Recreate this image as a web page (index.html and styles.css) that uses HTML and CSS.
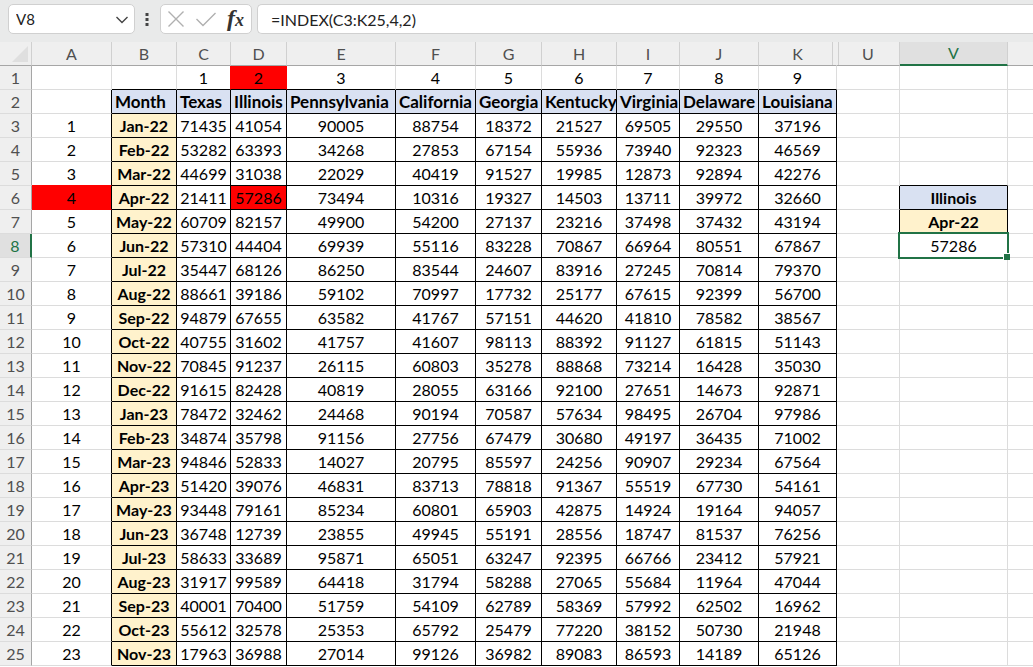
FILE: index.html
```html
<!DOCTYPE html>
<html lang="en">
<head>
  <meta charset="UTF-8" />
  <meta name="viewport" content="width=device-width, initial-scale=1.0" />
  <title>INDEX example</title>
  <link rel="stylesheet" href="styles.css">
</head>

<body>
  <header class="formula-bar">
    <div class="box name-box">
      <input class="name-input" type="text" value="V8" aria-label="Name box">
      <button class="icon-button" type="button" aria-label="Show names">
        <svg width="14" height="12" viewBox="0 0 14 12"><path d="M1.5 4 L7 9.5 L12.5 4" stroke="#444" stroke-width="1.4" /></svg>
      </button>
    </div>
    <svg class="grip" width="4" height="14" viewBox="0 0 4 14"><path d="M0.5 1h3v3h-3z M0.5 6h3v3h-3z M0.5 11h3v3h-3z" fill="#444" /></svg>
    <div class="box tools">
      <button class="icon-button" type="button" aria-label="Cancel">
        <svg width="18" height="18" viewBox="0 0 18 18"><path d="M1.5 1.5 L16.5 16.5 M16.5 1.5 L1.5 16.5" stroke="#b0b0b0" stroke-width="1.4" /></svg>
      </button>
      <button class="icon-button" type="button" aria-label="Enter">
        <svg width="22" height="18" viewBox="0 0 22 18"><path d="M1.5 9 L8 15.5 L20.5 3" stroke="#b0b0b0" stroke-width="1.4" /></svg>
      </button>
      <button class="icon-button fx" type="button" aria-label="Insert function"><i>f</i><i class="fx-x">x</i></button>
    </div>
    <input class="box formula-input" type="text" value="=INDEX(C3:K25,4,2)" aria-label="Formula">
  </header>

  <main>
    <table class="sheet">
      <colgroup>
        <col class="w-head"><col class="w-a"><col class="w-b"><col class="w-c"><col class="w-d"><col class="w-e"><col class="w-f"><col class="w-g"><col class="w-h"><col class="w-i"><col class="w-j"><col class="w-k"><col class="w-u"><col class="w-v"><col>
      </colgroup>
      <thead>
        <tr><th class="corner"><svg width="16" height="16" viewBox="0 0 16 16"><path d="M16 0v16H0z" fill="#dfdfdf" /></svg></th><th>A</th><th>B</th><th>C</th><th>D</th><th>E</th><th>F</th><th>G</th><th>H</th><th>I</th><th>J</th><th class="gap">K</th><th>U</th><th class="current">V</th><th></th></tr>
      </thead>
      <tbody>
        <tr class="index"><th>1</th><td></td><td></td><td class="before-hit">1</td><td class="hit">2</td><td>3</td><td>4</td><td>5</td><td>6</td><td>7</td><td>8</td><td>9</td><td></td><td></td><td></td></tr>
        <tr class="titles"><th>2</th><td></td><td>Month</td><td>Texas</td><td>Illinois</td><td>Pennsylvania</td><td>California</td><td>Georgia</td><td>Kentucky</td><td>Virginia</td><td>Delaware</td><td>Louisiana</td><td></td><td></td><td></td></tr>
        <tr class="data"><th>3</th><td>1</td><td>Jan-22</td><td>71435</td><td>41054</td><td>90005</td><td>88754</td><td>18372</td><td>21527</td><td>69505</td><td>29550</td><td>37196</td><td></td><td></td><td></td></tr>
        <tr class="data"><th>4</th><td>2</td><td>Feb-22</td><td>53282</td><td>63393</td><td>34268</td><td>27853</td><td>67154</td><td>55936</td><td>73940</td><td>92323</td><td>46569</td><td></td><td></td><td></td></tr>
        <tr class="data"><th>5</th><td class="above-hit">3</td><td>Mar-22</td><td>44699</td><td>31038</td><td>22029</td><td>40419</td><td>91527</td><td>19985</td><td>12873</td><td>92894</td><td>42276</td><td></td><td class="above-lookup"></td><td></td></tr>
        <tr class="data"><th>6</th><td class="hit hit-row">4</td><td>Apr-22</td><td>21411</td><td class="hit">57286</td><td>73494</td><td>10316</td><td>19327</td><td>14503</td><td>13711</td><td>39972</td><td>32660</td><td class="before-lookup"></td><td class="lookup state">Illinois</td><td></td></tr>
        <tr class="data"><th>7</th><td>5</td><td>May-22</td><td>60709</td><td>82157</td><td>49900</td><td>54200</td><td>27137</td><td>23216</td><td>37498</td><td>37432</td><td>43194</td><td class="before-lookup"></td><td class="lookup month">Apr-22</td><td></td></tr>
        <tr class="data"><th class="current">8</th><td>6</td><td>Jun-22</td><td>57310</td><td>44404</td><td>69939</td><td>55116</td><td>83228</td><td>70867</td><td>66964</td><td>80551</td><td>67867</td><td></td><td class="selected">57286</td><td></td></tr>
        <tr class="data"><th>9</th><td>7</td><td>Jul-22</td><td>35447</td><td>68126</td><td>86250</td><td>83544</td><td>24607</td><td>83916</td><td>27245</td><td>70814</td><td>79370</td><td></td><td></td><td></td></tr>
        <tr class="data"><th>10</th><td>8</td><td>Aug-22</td><td>88661</td><td>39186</td><td>59102</td><td>70997</td><td>17732</td><td>25177</td><td>67615</td><td>92399</td><td>56700</td><td></td><td></td><td></td></tr>
        <tr class="data"><th>11</th><td>9</td><td>Sep-22</td><td>94879</td><td>67655</td><td>63582</td><td>41767</td><td>57151</td><td>44620</td><td>41810</td><td>78582</td><td>38567</td><td></td><td></td><td></td></tr>
        <tr class="data"><th>12</th><td>10</td><td>Oct-22</td><td>40755</td><td>31602</td><td>41757</td><td>41607</td><td>98113</td><td>88392</td><td>91127</td><td>61815</td><td>51143</td><td></td><td></td><td></td></tr>
        <tr class="data"><th>13</th><td>11</td><td>Nov-22</td><td>70845</td><td>91237</td><td>26115</td><td>60803</td><td>35278</td><td>88868</td><td>73214</td><td>16428</td><td>35030</td><td></td><td></td><td></td></tr>
        <tr class="data"><th>14</th><td>12</td><td>Dec-22</td><td>91615</td><td>82428</td><td>40819</td><td>28055</td><td>63166</td><td>92100</td><td>27651</td><td>14673</td><td>92871</td><td></td><td></td><td></td></tr>
        <tr class="data"><th>15</th><td>13</td><td>Jan-23</td><td>78472</td><td>32462</td><td>24468</td><td>90194</td><td>70587</td><td>57634</td><td>98495</td><td>26704</td><td>97986</td><td></td><td></td><td></td></tr>
        <tr class="data"><th>16</th><td>14</td><td>Feb-23</td><td>34874</td><td>35798</td><td>91156</td><td>27756</td><td>67479</td><td>30680</td><td>49197</td><td>36435</td><td>71002</td><td></td><td></td><td></td></tr>
        <tr class="data"><th>17</th><td>15</td><td>Mar-23</td><td>94846</td><td>52833</td><td>14027</td><td>20795</td><td>85597</td><td>24256</td><td>90907</td><td>29234</td><td>67564</td><td></td><td></td><td></td></tr>
        <tr class="data"><th>18</th><td>16</td><td>Apr-23</td><td>51420</td><td>39076</td><td>46831</td><td>83713</td><td>78818</td><td>91367</td><td>55519</td><td>67730</td><td>54161</td><td></td><td></td><td></td></tr>
        <tr class="data"><th>19</th><td>17</td><td>May-23</td><td>93448</td><td>79161</td><td>85234</td><td>60801</td><td>65903</td><td>42875</td><td>14924</td><td>19164</td><td>94057</td><td></td><td></td><td></td></tr>
        <tr class="data"><th>20</th><td>18</td><td>Jun-23</td><td>36748</td><td>12739</td><td>23855</td><td>49945</td><td>55191</td><td>28556</td><td>18747</td><td>81537</td><td>76256</td><td></td><td></td><td></td></tr>
        <tr class="data"><th>21</th><td>19</td><td>Jul-23</td><td>58633</td><td>33689</td><td>95871</td><td>65051</td><td>63247</td><td>92395</td><td>66766</td><td>23412</td><td>57921</td><td></td><td></td><td></td></tr>
        <tr class="data"><th>22</th><td>20</td><td>Aug-23</td><td>31917</td><td>99589</td><td>64418</td><td>31794</td><td>58288</td><td>27065</td><td>55684</td><td>11964</td><td>47044</td><td></td><td></td><td></td></tr>
        <tr class="data"><th>23</th><td>21</td><td>Sep-23</td><td>40001</td><td>70400</td><td>51759</td><td>54109</td><td>62789</td><td>58369</td><td>57992</td><td>62502</td><td>16962</td><td></td><td></td><td></td></tr>
        <tr class="data"><th>24</th><td>22</td><td>Oct-23</td><td>55612</td><td>32578</td><td>25353</td><td>65792</td><td>25479</td><td>77220</td><td>38152</td><td>50730</td><td>21948</td><td></td><td></td><td></td></tr>
        <tr class="data"><th>25</th><td>23</td><td>Nov-23</td><td>17963</td><td>36988</td><td>27014</td><td>99126</td><td>36982</td><td>89083</td><td>86593</td><td>14189</td><td>65126</td><td></td><td></td><td></td></tr>
      </tbody>
    </table>
  </main>
</body>
</html>
```
FILE: styles.css
```css
:root {
  --grid: #dcdcdc;
  --head: #efefef;
  --head-line: #a6a6a6;
  --green: #217346;
  --blue: #d9e1f2;
  --cream: #fff2cc;
  --red: #ff0000;
}

* {
  box-sizing: border-box;
}

body {
  margin: 0;
  background: #fff;
  color: #000;
  font-family: Lato, "Liberation Sans", sans-serif;
  font-size: 16px;
}

svg {
  display: block;
  fill: none;
}

/* formula bar */
.formula-bar {
  display: flex;
  align-items: flex-start;
  height: 42px;
  padding: 4px 0 0 8px;
  background: #e9eaea;
}

.box {
  height: 30px;
  border: 1px solid #d0d0d0;
  border-radius: 5px;
  background: #fff;
}

.name-box {
  display: flex;
  align-items: center;
  width: 127px;
  padding: 0 5px 0 7px;
}

.name-input {
  flex: 1;
  min-width: 0;
  padding: 0;
  border: none;
  background: none;
  color: #222;
  font: inherit;
  font-size: 15px;
}

.icon-button {
  padding: 0;
  border: none;
  background: none;
}

.grip {
  margin: 8px 11px 0 10px;
}

.tools {
  display: flex;
  align-items: center;
  gap: 10px;
  width: 92px;
  margin-right: 5px;
  padding: 0 6px;
}

.fx {
  color: #333;
  font-family: "Liberation Serif", serif;
  font-size: 24px;
  font-weight: bold;
  line-height: 24px;
}

.fx-x {
  font-size: 18px;
}

.formula-input {
  flex: 1;
  min-width: 0;
  padding: 0 13px;
  border-right: none;
  border-radius: 5px 0 0 5px;
  color: #222;
  font: inherit;
}

/* grid */
.sheet {
  width: 100%;
  table-layout: fixed;
  border-collapse: separate;
  border-spacing: 0;
}

.w-head { width: 32px; }
.w-a { width: 80px; }
.w-b { width: 65px; }
.w-c { width: 54px; }
.w-d { width: 56px; }
.w-e { width: 109px; }
.w-f { width: 80px; }
.w-g { width: 66px; }
.w-h { width: 75px; }
.w-i { width: 63px; }
.w-j { width: 79px; }
.w-k { width: 78px; }
.w-u { width: 63px; }
.w-v { width: 108px; }

.sheet th,
.sheet td {
  height: 24px;
  padding: 0;
  border-right: 1px solid var(--grid);
  border-bottom: 1px solid var(--grid);
  line-height: 22px;
  text-align: center;
  white-space: nowrap;
}

.sheet th {
  background: var(--head);
  color: #505050;
  font-weight: normal;
}

.sheet thead th {
  border-right-color: #d0d0d0;
  border-bottom-color: var(--head-line);
}

.sheet tbody th {
  border-right-color: var(--head-line);
}

.sheet .corner svg {
  margin-left: 12px;
}

/* double line where columns L:T are hidden */
.sheet thead .gap {
  position: relative;
  border-right-color: var(--head);
}

.gap::after {
  content: "";
  position: absolute;
  top: 0;
  right: -3px;
  bottom: 0;
  width: 5px;
  border: solid #d0d0d0;
  border-width: 0 1px;
}

.sheet thead .current {
  border-bottom: 2px solid var(--green);
  background: #e0e0e0;
  color: var(--green);
}

.sheet tbody .current {
  border-right: 2px solid var(--green);
  background: #e0e0e0;
  color: var(--green);
}

.sheet td:last-child,
.sheet th:last-child {
  border-right: none;
}

/* bordered range B2:K25 */
.index td:nth-child(n+3):nth-child(-n+12) {
  border-bottom-color: #000;
}

.titles td:nth-child(n+3):nth-child(-n+12),
.data td:nth-child(n+3):nth-child(-n+12) {
  border-right-color: #000;
  border-bottom-color: #000;
}

.titles td:nth-child(2),
.data td:nth-child(2) {
  border-right-color: #000;
}

.titles td:nth-child(n+3):nth-child(-n+12) {
  padding-left: 3px;
  background: var(--blue);
  font-size: 17px;
  font-weight: bold;
  text-align: left;
}

.data td:nth-child(3) {
  background: var(--cream);
  font-weight: bold;
}

/* looked-up row, column and value */
.sheet .hit {
  background: var(--red);
}

.index .hit,
.index .before-hit {
  border-right-color: var(--red);
}

.sheet .above-hit,
.sheet .hit-row {
  border-bottom-color: var(--red);
}

.sheet .above-lookup {
  border-bottom-color: #000;
}

.sheet .before-lookup {
  border-right-color: #000;
}

.sheet .lookup {
  border-right-color: #000;
  border-bottom-color: #000;
  font-weight: bold;
}

.state {
  background: var(--blue);
}

.month {
  background: var(--cream);
}

.selected {
  position: relative;
}

.selected::before {
  content: "";
  position: absolute;
  inset: -2px;
  border: 2px solid var(--green);
}

.selected::after {
  content: "";
  position: absolute;
  right: -3px;
  bottom: -3px;
  width: 6px;
  height: 6px;
  border: solid #fff;
  border-width: 1px 0 0 1px;
  background: var(--green);
}
```
